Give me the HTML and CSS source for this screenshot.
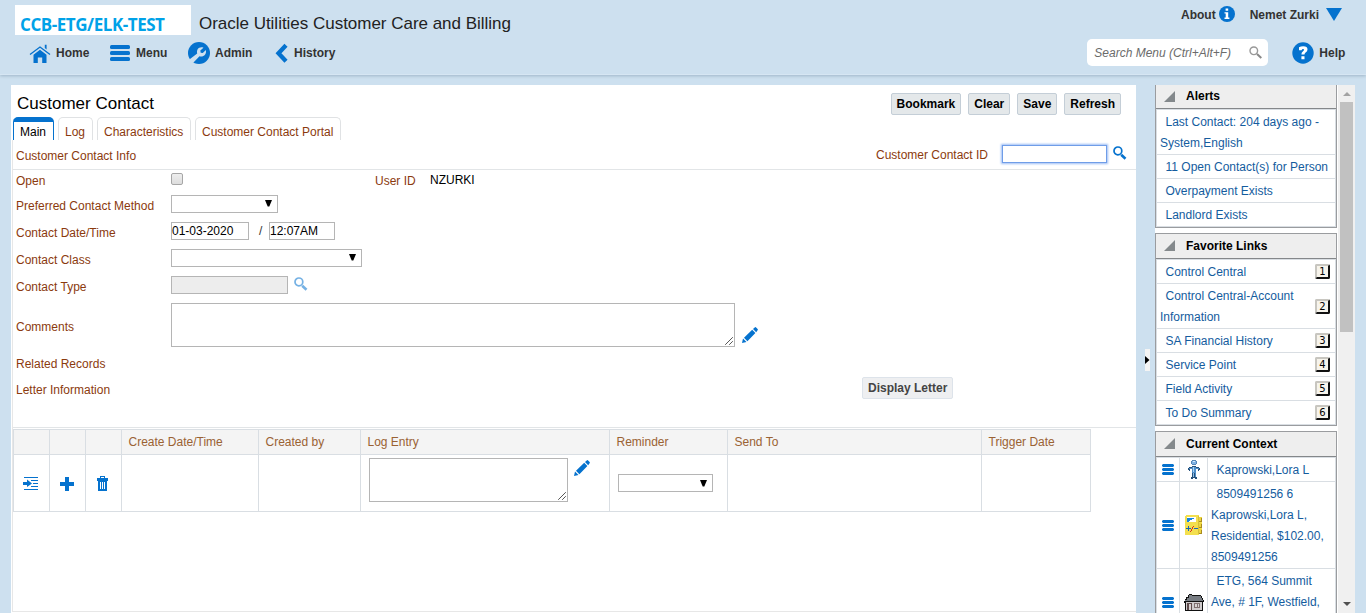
FILE: index.html
```html
<!DOCTYPE html>
<html lang="en">
<head>
<meta charset="utf-8">
<title>Customer Contact</title>
<link rel="stylesheet" href="styles.css">
</head>
<body>
<svg class="defs" width="0" height="0">
  <symbol id="pencil" viewBox="0 0 16 16"><path d="M0 16l1-4.500L4.500 15zM2 10.700L10.200 2.800l3.200 3.200-8 8.200zM11 2L12.700.4q.7-.6 1.400 0l1.500 1.500q.6.600 0 1.300L14.200 5.200z" fill="#0572ce"/></symbol>
  <symbol id="lens" viewBox="0 0 14 14"><circle cx="4.900" cy="4.900" r="3.900" fill="none" stroke="#0572ce" stroke-width="1.700"/><path d="M8.200 8.700l4.300 4.100" stroke="#0572ce" stroke-width="2.600" fill="none"/></symbol>
  <symbol id="grip" viewBox="0 0 8 8"><path d="M.2 7.800L7.800.2M4.200 7.800L7.800 4.200" stroke="#555" stroke-width="1" fill="none"/></symbol>
  <symbol id="tri" viewBox="0 0 11 11"><path d="M11 0v11H0z" fill="#84898c"/></symbol>
  <symbol id="bars" viewBox="0 0 12 11"><path d="M1 0h10l1 1v1l-1 1H1L0 2V1zM1 4h10l1 1v1l-1 1H1L0 6V5zM1 8h10l1 1v1l-1 1H1L0 10V9z" fill="#0572ce"/></symbol>
  <symbol id="arrow" viewBox="0 0 7 7"><path d="M0 0h7L4.300 6.500H2.700z" fill="#000"/></symbol>
</svg>

<header class="header">
  <div class="brand">
    <div class="logo">CCB-ETG/ELK-TEST</div>
    <div class="product">Oracle Utilities Customer Care and Billing</div>
    <div class="user">
      <span>About</span>
      <svg class="info" width="16" height="16" viewBox="0 0 16 16"><circle cx="8" cy="8" r="8" fill="#0572ce"/><path d="M6.600 2.500h2.600v2.200H6.600zM5.500 6.200h3.700v5.400h1.200v1.300H5.500v-1.300h1.200V7.500H5.500z" fill="#fff"/></svg>
      <span class="name">Nemet Zurki</span>
      <svg class="drop" width="16" height="13" viewBox="0 0 16 13"><path d="M0 0h16L8 13z" fill="#0572ce"/></svg>
    </div>
  </div>
  <nav class="nav">
    <a class="item home"><svg width="22" height="19" viewBox="0 0 22 19"><path d="M1 10.500L11 3l10 7.500" fill="none" stroke="#0572ce" stroke-width="1.300"/><path d="M11 5.800l6.500 4.900V19h-4.300v-5.500H8.800V19H4.500v-8.300zM15.800.8h1.800v4.600l-1.800-1.400z" fill="#0572ce"/></svg>Home</a>
    <a class="item menu"><svg width="20" height="16" viewBox="0 0 20 16"><rect width="20" height="4" rx="1.500" fill="#0572ce"/><rect y="6" width="20" height="4" rx="1.500" fill="#0572ce"/><rect y="12" width="20" height="4" rx="1.500" fill="#0572ce"/></svg>Menu</a>
    <a class="item admin"><svg width="22" height="22" viewBox="0 0 22 22"><circle cx="11" cy="11" r="11" fill="#0572ce"/><path d="M2 17L9.200 11.600C8.300 7.500 11 4.300 15.500 5.700L12.300 8.500l.4 2.200 2.100.4 3-3.100c1.200 4.500-2.600 7.500-6.300 6.300L5 21 2 20z" fill="#cde0ef"/></svg>Admin</a>
    <a class="item history"><svg width="13" height="20" viewBox="0 0 13 20"><path d="M11 2.200L3.500 10.200l7.500 8" fill="none" stroke="#0572ce" stroke-width="4.300"/></svg>History</a>
    <div class="search"><span>Search Menu (Ctrl+Alt+F)</span><svg width="13" height="13" viewBox="0 0 13 13"><circle cx="4.800" cy="4.800" r="3.800" fill="none" stroke="#999" stroke-width="1.400"/><path d="M8 8l4.300 4" stroke="#888" stroke-width="2"/></svg></div>
    <a class="item help"><svg width="22" height="22" viewBox="0 0 22 22"><circle cx="11" cy="11" r="10.700" fill="#0572ce"/><path d="M7 8.200V5.300q1.800-1.100 4.300-1.100 4.200 0 4.200 3.300 0 1.800-1.900 3.100-1.100.8-1.100 1.900H9.400q0-2 1.400-3 1.300-1 1.300-1.700 0-.9-1.100-.9-1.100 0-1.400 1.300zM9.400 14.200h3.100v3.100H9.400z" fill="#fff"/></svg>Help</a>
  </nav>
</header>

<div class="workspace">
  <main class="main">
    <div class="titlebar">
      <h1>Customer Contact</h1>
      <div class="actions"><button>Bookmark</button><button>Clear</button><button>Save</button><button>Refresh</button></div>
    </div>
    <div class="tabs"><a class="tab active">Main</a><a class="tab log">Log</a><a class="tab chars">Characteristics</a><a class="tab portal">Customer Contact Portal</a></div>

    <section class="page">
      <div class="section-head">
        <span class="info-title">Customer Contact Info</span>
        <span class="id-label">Customer Contact ID</span>
        <span class="id-input"></span>
        <svg class="id-lens" width="14" height="14"><use href="#lens"/></svg>
      </div>
      <div class="form">
        <div class="row open"><label>Open</label><span class="check"></span><span class="uid">User ID</span><span class="uid-value">NZURKI</span></div>
        <div class="row"><label>Preferred Contact Method</label><span class="field select w107"><svg width="7" height="7"><use href="#arrow"/></svg></span></div>
        <div class="row"><label>Contact Date/Time</label><span class="field w78">01-03-2020</span><span class="slash">/</span><span class="field w66">12:07AM</span></div>
        <div class="row"><label>Contact Class</label><span class="field select w191"><svg width="7" height="7"><use href="#arrow"/></svg></span></div>
        <div class="row"><label>Contact Type</label><span class="field disabled w117"></span><svg class="type-lens" width="14" height="14"><use href="#lens"/></svg></div>
        <div class="row comments"><label>Comments</label><span class="area"><svg width="8" height="8"><use href="#grip"/></svg></span><svg class="pen" width="16" height="16"><use href="#pencil"/></svg></div>
        <div class="row related"><label>Related Records</label></div>
        <div class="row letter"><label>Letter Information</label><button>Display Letter</button></div>
      </div>
      <div class="grid">
        <div class="cell head"></div><div class="cell head"></div><div class="cell head"></div>
        <div class="cell head">Create Date/Time</div><div class="cell head">Created by</div><div class="cell head">Log Entry</div>
        <div class="cell head">Reminder</div><div class="cell head">Send To</div><div class="cell head">Trigger Date</div>
        <div class="cell icon"><svg width="16" height="14" viewBox="0 0 16 14"><path d="M1 0h14v1H1zM1 12h14v1H1zM8 3h7v1H8zM10 6h5v1h-5zM8 9h7v1H8zM0 5h4V2.500L9 6.500 4 10V8H0z" fill="#0572ce"/></svg></div>
        <div class="cell icon"><svg width="14" height="14" viewBox="0 0 14 14"><path d="M5 0h4v5h5v4H9v5H5V9H0V5h5z" fill="#0572ce"/></svg></div>
        <div class="cell icon"><svg width="11" height="15" viewBox="0 0 11 15"><path d="M3 2V0h5v2h3v3h-1v10H1V5H0V2zM4 1v1h3V1zM3 6v7h1V6zM5 6v7h1V6zM7 6v7h1V6z" fill="#0572ce" fill-rule="evenodd"/></svg></div>
        <div class="cell"></div><div class="cell"></div>
        <div class="cell entry"><span class="area"><svg width="8" height="8"><use href="#grip"/></svg></span><svg class="pen" width="16" height="16"><use href="#pencil"/></svg></div>
        <div class="cell reminder"><span class="field select w95"><svg width="7" height="7"><use href="#arrow"/></svg></span></div>
        <div class="cell"></div><div class="cell"></div>
      </div>
    </section>
  </main>

  <div class="splitter"><span><svg width="5" height="8" viewBox="0 0 5 8"><path d="M0 0l4.500 4L0 8z" fill="#000"/></svg></span></div>

  <aside class="side">
    <section class="box alerts">
      <h2><svg width="11" height="11"><use href="#tri"/></svg>Alerts</h2>
      <ul>
        <li><a>Last Contact: 204 days ago - System,English</a></li>
        <li><a>11 Open Contact(s) for Person</a></li>
        <li><a>Overpayment Exists</a></li>
        <li><a>Landlord Exists</a></li>
      </ul>
    </section>
    <section class="box">
      <h2><svg width="11" height="11"><use href="#tri"/></svg>Favorite Links</h2>
      <ul>
        <li><a>Control Central</a><kbd>1</kbd></li>
        <li><a>Control Central-Account Information</a><kbd>2</kbd></li>
        <li><a>SA Financial History</a><kbd>3</kbd></li>
        <li><a>Service Point</a><kbd>4</kbd></li>
        <li><a>Field Activity</a><kbd>5</kbd></li>
        <li><a>To Do Summary</a><kbd>6</kbd></li>
      </ul>
    </section>
    <section class="box context">
      <h2><svg width="11" height="11"><use href="#tri"/></svg>Current Context</h2>
      <ul>
        <li><i class="c1"><svg width="12" height="11"><use href="#bars"/></svg></i>
          <i class="c2"><svg width="12" height="19" viewBox="0 0 12 19" shape-rendering="crispEdges"><path d="M4 0h4v1h1v3H8v1H4V4H3V1h1z" fill="#5585b5"/><path d="M4 1h4v3H4z" fill="#7fb2e4"/><path d="M5 1h2v1H5z" fill="#d3eaff"/><path d="M4 6h4v1h3v1h1v2h-1v1h-1V9H8v8h1v2H7v-1H5v1H3v-2h1V9H2v2H1v-1H0V8h1V7h3z" fill="#27527c"/><path d="M4 7h4v6H4zM1 8h3v1H1zM8 8h3v1H8z" fill="#4f8fca"/><path d="M5 7h1v5H5z" fill="#a9d3f6"/><path d="M5 13h1v4H5z" fill="#8fc0ea"/><path d="M7 13h1v4H7z" fill="#4f8fca"/></svg></i><a>Kaprowski,Lora L</a></li>
        <li><i class="c1"><svg width="12" height="11"><use href="#bars"/></svg></i>
          <i class="c2"><svg width="18" height="20" viewBox="0 0 18 20" shape-rendering="crispEdges"><path d="M1 0h13v2h3v17h-3v1H0V1z" fill="#f3df4e"/><path d="M13 1h1v18h-1z" fill="#d6bf3a"/><path d="M14 2h3v5h-3zM14 8h3v5h-3zM14 14h3v4h-3z" fill="#ecd53e"/><path d="M14 6h3v1h-3zM16 3h1v3h-1zM14 12h3v1h-3zM16 9h1v3h-1zM14 18h3v1h-3zM16 15h1v3h-1z" fill="#a98b1f"/><path d="M2 2h9v5H2z" fill="#fff"/><path d="M2 3h7v1H7v1H5v1H4v1H2z" fill="#1686e0"/><path d="M3 11h1v2h2v1H4v2H3v-2H1v-1h2zM9 13h4v1H9z" fill="#1767b7"/><path d="M8 11h1v1H8v2H7v2H6v1H5v-1h1v-2h1v-2h1z" fill="#d8321e"/></svg></i><a>8509491256 6 Kaprowski,Lora L, Residential, $102.00, 8509491256</a></li>
        <li class="last"><i class="c1"><svg width="12" height="11"><use href="#bars"/></svg></i>
          <i class="c2"><svg width="20" height="17" viewBox="0 0 20 17" shape-rendering="crispEdges"><path d="M4 1h1V0h3v1h9v1h1v2h1v2h1v2h-1v9H1V9H0V7h1V5h1V3h2z" fill="#111"/><path d="M5 1h3v1h9v2h1v2h1v1H1V6h2V4h2z" fill="#777c82"/><path d="M2 8h16v8H2z" fill="#d0cccd"/><path d="M3 9h5v7H3z" fill="#5f4c4c"/><path d="M5 10h2v6H5z" fill="#d8d0d0"/><path d="M10 9h6v5h-6z" fill="#807070"/><path d="M11 10h2v3h-2zM14 10h1v3h-1z" fill="#d8d4d4"/></svg></i><a>ETG, 564 Summit Ave, # 1F, Westfield,</a></li>
      </ul>
    </section>
  </aside>
  <div class="scroll">
    <svg width="8" height="4" viewBox="0 0 8 4"><path d="M4 0l4 4H0z" fill="#a3a3a3"/></svg>
    <span class="thumb"></span>
    <svg class="down" width="8" height="4" viewBox="0 0 8 4"><path d="M0 0h8L4 4z" fill="#505050"/></svg>
  </div>
</div>
</body>
</html>
```
FILE: styles.css
```css
* { box-sizing: border-box; }
body { margin: 0; width: 1366px; height: 613px; overflow: hidden; background: #cde0ef; font: 12px/14px "Liberation Sans", Arial, sans-serif; color: #000; }
svg { display: block; flex: none; }
.defs { position: absolute; }
h1, h2, ul { margin: 0; padding: 0; font-weight: normal; list-style: none; }
i { font-style: normal; }

.header { height: 75px; border-bottom: 1px solid #d6e6f3; box-shadow: 0 1px 3px #9fb6c8; font-weight: bold; color: #333; }
.brand { display: flex; height: 36px; padding: 5px 24px 0 15px; }
.logo { width: 176px; height: 30px; background: #fff; padding: 10px 0 0 5px; font: bold 17px/20px "Open Sans", Lato, sans-serif; letter-spacing: -0.45px; color: #00a2e8; white-space: nowrap; }
.product { padding: 9px 0 0 8px; font: 17px/20px "Liberation Sans", Arial, sans-serif; letter-spacing: -0.02px; color: #222; white-space: nowrap; }
.user { display: flex; align-items: flex-start; margin-left: auto; line-height: 20px; }
.info { margin: 1px 15px 0 3px; }
.drop { margin: 3px 0 0 7px; }
.nav { display: flex; align-items: center; height: 34px; padding-left: 29px; }
.item { display: flex; align-items: center; }
.home { gap: 5px; width: 81px; }
.menu { gap: 6px; width: 78px; }
.admin { gap: 5px; width: 87px; }
.history { gap: 6px; }
.search { display: flex; align-items: center; justify-content: space-between; width: 181px; height: 27px; margin: -1px 0 0 752px; padding: 0 6px 0 7px; border-radius: 5px; background: #fff; font-weight: normal; font-style: italic; color: #6b6b6b; white-space: nowrap; }
.help { gap: 5px; margin-left: 24px; }

.workspace { display: flex; height: 528px; margin-top: 10px; padding-left: 11px; }
.main { width: 1125px; background: #fff; }
.titlebar { display: flex; justify-content: space-between; height: 32px; padding: 8px 15px 0 6px; }
h1 { padding-top: 1px; font-size: 17px; line-height: 20px; }
.actions { display: flex; gap: 7px; }
button { height: 22px; padding: 0 5px; border: 1px solid #c4ced7; border-radius: 2px; background: #e4e8ea; font: bold 12px/18px "Liberation Sans", Arial, sans-serif; color: #000; white-space: nowrap; }
.tabs { display: flex; height: 23px; padding-left: 2px; gap: 4px; }
.tab { height: 23px; padding: 7px 0 0 6px; border: 1px solid #e0e2e4; border-bottom: 0; border-radius: 5px 5px 0 0; color: #8b3a0e; white-space: nowrap; }
.tab.active { width: 41px; padding-top: 3px; border: 1px solid #0572ce; border-width: 5px 1px 0; color: #000; }
.log { width: 35px; }
.chars { width: 94px; }
.portal { width: 146px; }
.page { height: 472px; margin-left: 1px; border-left: 1px solid #e7e7e7; border-bottom: 1px solid #e7e7e7; color: #8b3a0e; }
.section-head { display: flex; height: 30px; padding-left: 3px; border-bottom: 1px solid #e2e5e7; }
.info-title { width: 860px; padding-top: 9px; }
.id-label { width: 126px; padding-top: 8px; }
.id-input { width: 105px; height: 18px; margin-top: 5px; border: 1px solid #6f9de8; background: #fff; box-shadow: 0 0 2px 1px #9dbdf5; }
.id-lens { margin: 6px 0 0 6px; }
.form { height: 258px; padding-left: 3px; border-bottom: 1px solid #e2e5e7; }
.row { display: flex; align-items: center; height: 27px; }
.row label { width: 155px; padding-top: 4px; }
.open { height: 20px; }
.row.open label { padding-top: 1px; }
.check { width: 12px; height: 12px; margin-top: -2px; border: 1px solid #a6a6a6; border-radius: 2px; background: linear-gradient(#eee, #ddd); }
.uid { width: 55px; margin-left: 192px; padding-top: 2px; }
.uid-value { color: #000; }
.field { height: 18px; border: 1px solid #b5b5b5; background: #fff; line-height: 16px; color: #000; }
.select { display: flex; align-items: center; justify-content: flex-end; padding-right: 5px; }
.disabled { background: #ededed; }
.w107 { width: 107px; } .w78 { width: 78px; } .w66 { width: 66px; } .w191 { width: 191px; } .w117 { width: 117px; } .w95 { width: 95px; }
.slash { width: 20px; padding-left: 10px; color: #333; }
.type-lens { margin: -1px 0 0 6px; opacity: .55; }
.comments { height: 54px; }
.area { display: flex; align-items: flex-end; justify-content: flex-end; width: 564px; height: 44px; padding: 0 1px 1px; border: 1px solid #b5b5b5; background: #fff; }
.pen { margin: 20px 0 0 7px; }
.related { height: 24px; }
.row.related label { padding: 0; }
.letter { height: 24px; }
.letter button { margin-left: 691px; border-color: #dde3ea; background: #eeeff1; color: #444; }

.grid { display: grid; grid-template-columns: 36px 36px 36px 137px 102px 249px 118px 254px 110px; grid-template-rows: 26px 57px; width: 1078px; margin-top: 1px; }
.cell { border-left: 1px solid #d9dee3; border-bottom: 1px solid #d9dee3; }
.cell:nth-child(9n) { border-right: 1px solid #d9dee3; }
.head { padding: 5px 0 0 6.500px; border-top: 1px solid #d9dee3; background: #f4f4f4; color: #9a6233; }
.icon { display: flex; align-items: center; justify-content: center; padding: 1px 2px 0 0; }
.entry { display: flex; padding: 3px 0 0 8px; }
.entry .area { width: 199px; }
.entry .pen { margin: 2px 0 0 6px; }
.reminder { display: flex; align-items: center; padding-left: 8px; }

.splitter { display: flex; width: 19px; padding: 264px 0 0 9px; }
.splitter span { display: flex; align-items: center; width: 5px; height: 22px; background: #f4f4f4; }
.side { width: 182px; overflow: hidden; background: #fff; }
.box { margin-bottom: 5px; border: 1px solid #9a9c9f; color: #145c9e; }
.box h2 { display: flex; align-items: center; gap: 11px; height: 25px; padding: 0 0 1px 8px; border-bottom: 1px solid #84878a; background: #eee; font-size: 12px; font-weight: bold; color: #000; }
.alerts { border-top: 0; }
.alerts h2 { height: 24px; }
.box ul { border: 1px solid #d9dee3; }
.box li { display: flex; align-items: center; padding: 2px 5px 0 3px; border-bottom: 1px solid #d9dee3; line-height: 21px; }
.box li:last-child { border-bottom: 0; }
.box a { flex: 1; text-indent: 5.500px; }
kbd { width: 15px; height: 15px; margin-top: -2px; border: 2px solid #c8c6c0; border-right-color: #111; border-bottom-color: #111; border-radius: 2px; background: #f7f4ec; font: 10px/11px "DejaVu Sans", sans-serif; text-align: center; color: #000; }
.box.context li { align-items: stretch; padding: 0; }
.context a { padding: 2px 0 0 3px; }
.context .last { min-height: 66px; }
.c1, .c2 { display: flex; align-items: center; justify-content: center; width: 23px; border-right: 1px solid #d9dee3; }
.c2 { width: 28px; }
.scroll { display: flex; flex-direction: column; align-items: center; width: 18px; margin-right: 11px; padding: 7px 0; border-left: 1px solid #fff; background: #f0f0f0; }
.thumb { width: 13px; height: 230px; margin-top: 6px; background: #c1c1c1; }
.down { margin-top: auto; }
```
